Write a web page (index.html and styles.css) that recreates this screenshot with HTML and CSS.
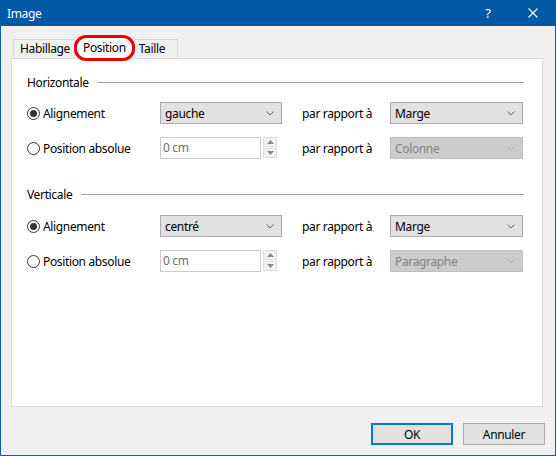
FILE: index.html
```html
<!DOCTYPE html>
<html>
<head>
    <title>Image</title>
    <meta charset="UTF-8">
    <link rel="stylesheet" href="styles.css">
</head>
<body>
    <div class="window">
        <div class="titlebar">
            <span class="title">Image</span>
            <span class="help">?</span>
            <span class="close">
                <svg width="10" height="10" viewBox="0 0 10 10"><path d="M0.5 0.5 L9.5 9.5 M9.5 0.5 L0.5 9.5" stroke="#fff" stroke-width="1.1"/></svg>
            </span>
        </div>
        <div class="content">
            <div class="tabs">
                <div class="tab">Habillage</div>
                <div class="tab active">Position</div>
                <div class="tab last">Taille</div>
            </div>
            <div class="panel">
                <div class="group-title"><span>Horizontale</span><div class="rule"></div></div>
                <div class="grid">
                    <label class="radio"><span class="dot checked"></span>Alignement</label>
                    <div class="select"><span>gauche</span><svg class="chev" width="8" height="5" viewBox="0 0 8 5"><path d="M0.5 0.5 L4 4 L7.5 0.5" fill="none" stroke="#606060"/></svg></div>
                    <span class="rel">par rapport à</span>
                    <div class="select wide"><span>Marge</span><svg class="chev" width="8" height="5" viewBox="0 0 8 5"><path d="M0.5 0.5 L4 4 L7.5 0.5" fill="none" stroke="#606060"/></svg></div>

                    <label class="radio"><span class="dot"></span>Position absolue</label>
                    <div class="spin">
                        <div class="field">0 cm</div>
                        <div class="arrows">
                            <div class="arrow"><svg width="7" height="4" viewBox="0 0 7 4"><path d="M0 4 L3.5 0 L7 4 Z" fill="#8a8a8a"/></svg></div>
                            <div class="arrow"><svg width="7" height="4" viewBox="0 0 7 4"><path d="M0 0 L3.5 4 L7 0 Z" fill="#8a8a8a"/></svg></div>
                        </div>
                    </div>
                    <span class="rel">par rapport à</span>
                    <div class="select wide disabled"><span>Colonne</span><svg class="chev" width="8" height="5" viewBox="0 0 8 5"><path d="M0.5 0.5 L4 4 L7.5 0.5" fill="none" stroke="#b4b4b4"/></svg></div>
                </div>

                <div class="group-title second"><span>Verticale</span><div class="rule"></div></div>
                <div class="grid">
                    <label class="radio"><span class="dot checked"></span>Alignement</label>
                    <div class="select"><span>centré</span><svg class="chev" width="8" height="5" viewBox="0 0 8 5"><path d="M0.5 0.5 L4 4 L7.5 0.5" fill="none" stroke="#606060"/></svg></div>
                    <span class="rel">par rapport à</span>
                    <div class="select wide"><span>Marge</span><svg class="chev" width="8" height="5" viewBox="0 0 8 5"><path d="M0.5 0.5 L4 4 L7.5 0.5" fill="none" stroke="#606060"/></svg></div>

                    <label class="radio"><span class="dot"></span>Position absolue</label>
                    <div class="spin">
                        <div class="field">0 cm</div>
                        <div class="arrows">
                            <div class="arrow"><svg width="7" height="4" viewBox="0 0 7 4"><path d="M0 4 L3.5 0 L7 4 Z" fill="#8a8a8a"/></svg></div>
                            <div class="arrow"><svg width="7" height="4" viewBox="0 0 7 4"><path d="M0 0 L3.5 4 L7 0 Z" fill="#8a8a8a"/></svg></div>
                        </div>
                    </div>
                    <span class="rel">par rapport à</span>
                    <div class="select wide disabled"><span>Paragraphe</span><svg class="chev" width="8" height="5" viewBox="0 0 8 5"><path d="M0.5 0.5 L4 4 L7.5 0.5" fill="none" stroke="#b4b4b4"/></svg></div>
                </div>
            </div>
            <div class="buttons">
                <div class="btn default">OK</div>
                <div class="btn">Annuler</div>
            </div>
        </div>
    </div>
</body>
</html>
```

FILE: styles.css
```css
body {
    margin: 0;
    font-family: "Noto Sans", "Open Sans", sans-serif;
    font-size: 12px;
    letter-spacing: -0.35px;
    color: #000;
}
.window {
    width: 556px;
    height: 456px;
    box-sizing: border-box;
    border: 1px solid #0d5ea7;
    border-top: none;
    background-color: #f0f0f0;
    display: flex;
    flex-direction: column;
}
.titlebar {
    height: 26px;
    margin: 0 -1px;
    background-color: #0059a5;
    color: #fff;
    display: flex;
    align-items: center;
    padding-left: 7px;
    font-size: 12px;
}
.title {
    flex: 1;
}
.help {
    width: 14px;
    margin-right: 33px;
    font-size: 13px;
    text-align: center;
}
.close {
    width: 10px;
    height: 10px;
    margin-right: 18px;
    display: flex;
}
.content {
    flex: 1;
    display: flex;
    flex-direction: column;
}
.tabs {
    display: flex;
    align-items: flex-end;
    margin: 10px 0 0 12px;
    height: 22px;
}
.tab {
    height: 19px;
    line-height: 18px;
    padding: 0 6px;
    border: 1px solid #d9d9d9;
    border-bottom: none;
    background-color: #f0f0f0;
    box-sizing: border-box;
}
.tab.last {
    padding: 0 12px 0 5px;
}
.tab.active {
    position: relative;
    height: 22px;
    line-height: 19px;
    padding: 0 8px;
    margin: 0 -2px -1px -3px;
    background-color: #fff;
    z-index: 1;
}
.tab.active::after {
    content: "";
    position: absolute;
    left: -1px;
    top: -3px;
    right: -1px;
    bottom: -2px;
    border: 3px solid #ea0000;
    border-radius: 12px;
}
.panel {
    height: 349px;
    box-sizing: border-box;
    margin: 0 12px 0 10px;
    border: 1px solid #d9d9d9;
    background-color: #fff;
    padding: 15px 18px 0 15px;
}
.group-title {
    display: flex;
    align-items: center;
    height: 16px;
    margin-bottom: 12px;
}
.group-title.second {
    margin-top: 27px;
    margin-bottom: 13px;
}
.rule {
    flex: 1;
    height: 1px;
    background-color: #a0a0a0;
    margin-left: 9px;
}
.grid {
    display: grid;
    grid-template-columns: 133px 142px 88px 133px;
    grid-auto-rows: 22px;
    row-gap: 13px;
    align-items: center;
}
.radio {
    display: flex;
    align-items: center;
}
.dot {
    width: 13px;
    height: 13px;
    box-sizing: border-box;
    border: 1px solid #333;
    border-radius: 50%;
    margin-right: 3px;
    display: flex;
    align-items: center;
    justify-content: center;
}
.dot.checked::after {
    content: "";
    width: 7px;
    height: 7px;
    border-radius: 50%;
    background-color: #333;
}
.select {
    width: 122px;
    height: 22px;
    box-sizing: border-box;
    border: 1px solid #adadad;
    background-color: #e1e1e1;
    display: flex;
    align-items: center;
    justify-content: space-between;
    padding: 0 7px 0 4px;
}
.select.wide {
    width: 133px;
}
.select.disabled {
    background-color: #cccccc;
    border-color: #bfbfbf;
    color: #838383;
}
.spin {
    display: flex;
    gap: 2px;
}
.field {
    width: 101px;
    height: 22px;
    box-sizing: border-box;
    border: 1px solid #cccccc;
    color: #6d6d6d;
    padding-left: 2px;
    line-height: 20px;
}
.arrows {
    display: flex;
    flex-direction: column;
    gap: 1px;
}
.arrow {
    width: 14px;
    height: 10px;
    box-sizing: border-box;
    border: 1px solid #dcdcdc;
    background-color: #f0f0f0;
    display: flex;
    align-items: center;
    justify-content: center;
}
.buttons {
    display: flex;
    justify-content: flex-end;
    gap: 10px;
    padding: 16px 10px 0 0;
}
.btn {
    width: 82px;
    height: 22px;
    box-sizing: border-box;
    border: 1px solid #adadad;
    background-color: #e1e1e1;
    display: flex;
    align-items: center;
    justify-content: center;
}
.btn.default {
    border: 2px solid #0078d7;
}
```
